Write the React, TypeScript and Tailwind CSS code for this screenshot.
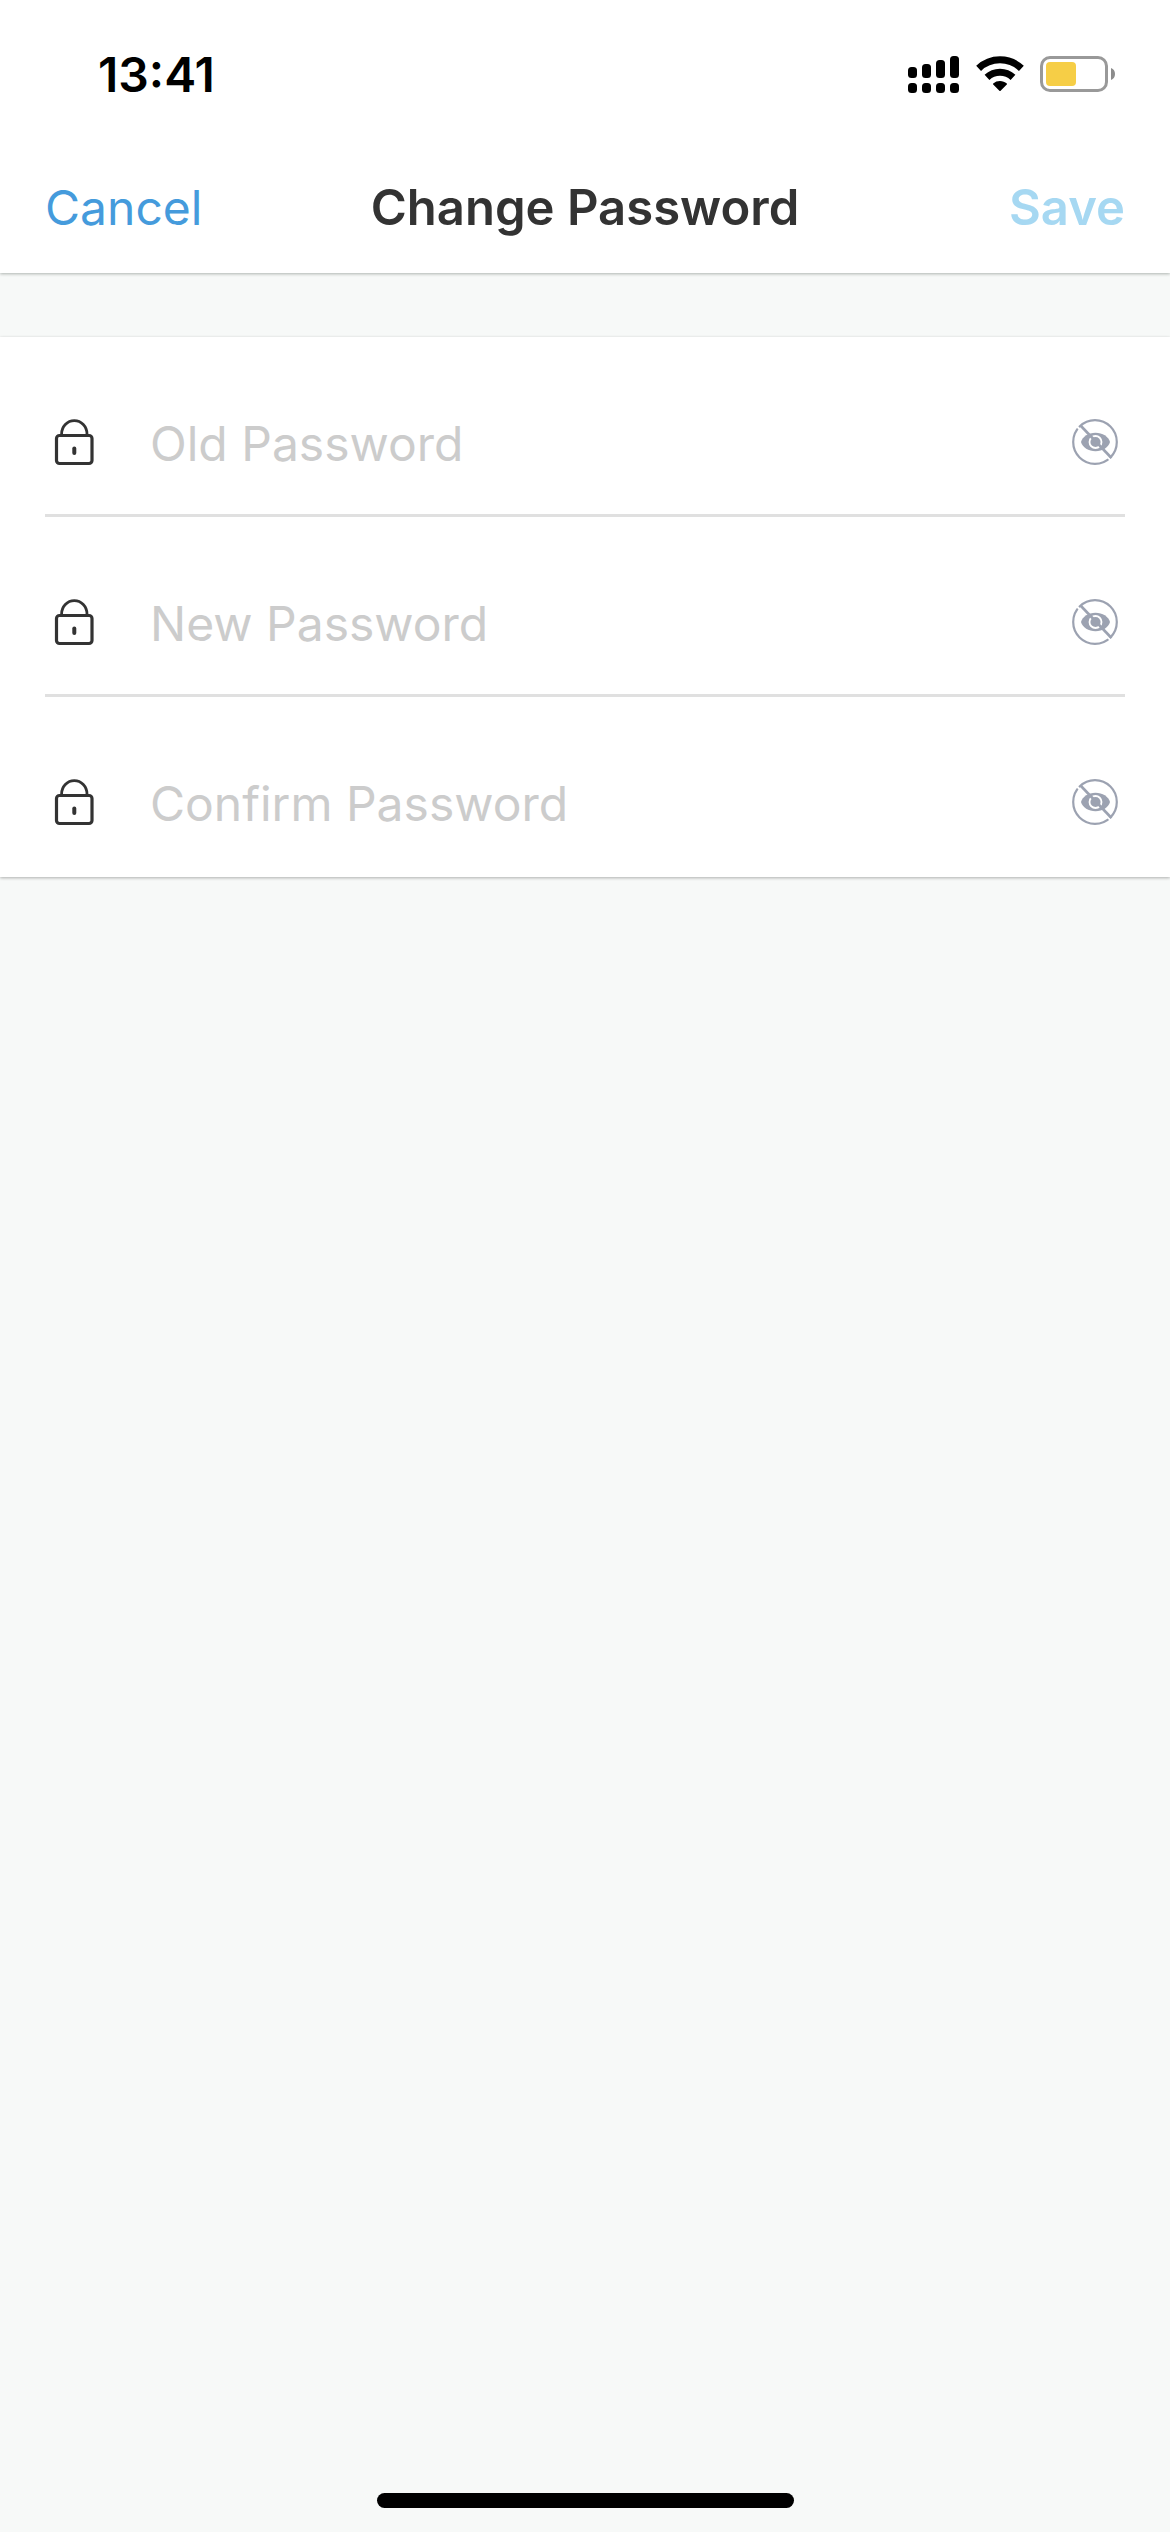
import { useState } from 'react';

interface PasswordFieldProps {
  id: string;
  label: string;
  last?: boolean;
}

const FIELDS = [
  { id: 'old-password', label: 'Old Password' },
  { id: 'new-password', label: 'New Password' },
  { id: 'confirm-password', label: 'Confirm Password' },
];

function SignalIcon() {
  return (
    <svg viewBox="0 0 52 38" className="h-[38px] w-[52px]" fill="currentColor">
      <rect x="0" y="11" width="9" height="11" rx="3.5" />
      <rect x="14" y="8" width="9" height="14" rx="3.5" />
      <rect x="28" y="4" width="9" height="18" rx="3.5" />
      <rect x="42" y="0" width="9" height="22" rx="3.5" />
      <rect x="0" y="27" width="9" height="10" rx="3.5" />
      <rect x="14" y="27" width="9" height="10" rx="3.5" />
      <rect x="28" y="27" width="9" height="10" rx="3.5" />
      <rect x="42" y="27" width="9" height="10" rx="3.5" />
    </svg>
  );
}

function WifiIcon() {
  return (
    <svg viewBox="0 0 48 38" className="h-[38px] w-12" fill="none" stroke="currentColor">
      <path d="M2.6 12.4A31 31 0 0 1 45.4 12.4" strokeWidth="7" />
      <path d="M11 21.4A19 19 0 0 1 37 21.4" strokeWidth="7" />
      <path
        d="M24 25c2.6 0 5 .9 6.8 2.4.3.3.3.7 0 1l-6.2 6.4c-.4.4-.8.4-1.2 0l-6.2-6.4c-.3-.3-.3-.7 0-1A10.6 10.6 0 0 1 24 25Z"
        fill="currentColor"
        stroke="none"
      />
    </svg>
  );
}

function BatteryIcon() {
  return (
    <svg viewBox="0 0 76 38" className="h-[38px] w-[76px]">
      <rect x="1.5" y="1.5" width="65" height="33" rx="8.5" fill="none" stroke="#999999" strokeWidth="3" />
      <rect x="6" y="6" width="30" height="24" rx="4" fill="#f6ce46" />
      <path d="M71 12c2.6 1 4 3.3 4 6s-1.4 5-4 6V12Z" fill="#8c8c8c" />
    </svg>
  );
}

function LockIcon() {
  return (
    <svg viewBox="0 0 40 48" className="h-12 w-10" fill="none" stroke="#333333" strokeWidth="3.2">
      <rect x="2.5" y="17.5" width="35.5" height="28" rx="3" />
      <path d="M7.6 16a12.7 13.4 0 0 1 25.4 0" strokeWidth="2.8" />
      <path d="M20.3 30.5v4.5" strokeWidth="4" strokeLinecap="round" />
    </svg>
  );
}

function EyeIcon({ off }: { off: boolean }) {
  return (
    <svg viewBox="0 0 48 48" className="size-12" fill="none" stroke="#9ca2b1" strokeWidth="2.2">
      <circle cx="24" cy="24" r="21.8" />
      <path
        d="M10 24c1.500-5.500 7.500-9.300 14.500-9.300S37.500 18.500 39 24c-1.500 5.500-7.500 9.300-14.500 9.300S11.500 29.500 10 24Z"
        fill="#9ca2b1"
        stroke="none"
      />
      <circle cx="24.5" cy="24" r="6" stroke="#ffffff" strokeWidth="1.8" />
      {off && (
        <>
          {/* breaks in the ring beside each end of the slash */}
          <path d="M5 7.5 9.500 12M37 39.500 40.500 43" stroke="#ffffff" strokeWidth="2" />
          <path d="M9.500 7.500 40.500 40" strokeWidth="2.600" />
        </>
      )}
    </svg>
  );
}

function StatusBar() {
  return (
    <div className="flex h-[141px] items-center justify-between pl-[98px] pr-[54px] pt-2 text-black">
      <span className="text-5xl font-semibold leading-none">13:41</span>
      <div className="flex items-center gap-4">
        <SignalIcon />
        <WifiIcon />
        <BatteryIcon />
      </div>
    </div>
  );
}

function PasswordField({ id, label, last = false }: PasswordFieldProps) {
  const [visible, setVisible] = useState(false);

  return (
    <div
      className={`mx-[45px] flex h-[180px] items-center border-b-[3px] pt-[33px] ${
        last ? 'border-transparent' : 'border-[#e0e0e0]'
      }`}
    >
      <label htmlFor={id} className="ml-[9px] shrink-0">
        <LockIcon />
      </label>
      <input
        id={id}
        type={visible ? 'text' : 'password'}
        aria-label={label}
        placeholder={label}
        className="ml-14 h-20 min-w-0 flex-1 bg-transparent pt-0.5 text-5xl text-[#333333] outline-none placeholder:text-[#cccccc]"
      />
      <button
        type="button"
        aria-label={visible ? 'Hide' : 'Show'}
        onClick={() => setVisible(!visible)}
        className="mr-[6px] shrink-0"
      >
        <EyeIcon off={!visible} />
      </button>
    </div>
  );
}

export default function App() {
  return (
    <div className="flex min-h-screen flex-col bg-[#f7f9f8] font-['Inter',sans-serif]">
      <header className="bg-white shadow-[0_1px_3px_rgba(0,20,10,0.3)]">
        <StatusBar />
        <nav className="grid h-[132px] grid-cols-[1fr_auto_1fr] items-center px-[45px] pt-0.5 text-[49px]">
          <button type="button" className="justify-self-start text-5xl text-[#459bdc]">
            Cancel
          </button>
          <h1 className="font-semibold text-[#333333]">Change Password</h1>
          <button type="submit" form="password-form" className="justify-self-end font-semibold text-[#a6d8f2]">
            Save
          </button>
        </nav>
      </header>

      <form
        id="password-form"
        onSubmit={(e) => e.preventDefault()}
        className="mt-16 bg-white shadow-[0_1px_3px_rgba(0,0,0,0.3)]"
      >
        {FIELDS.map((field, i) => (
          <PasswordField key={field.id} {...field} last={i === FIELDS.length - 1} />
        ))}
      </form>

      {/* Home indicator */}
      <div className="mx-auto mb-6 mt-auto h-[15px] w-[417px] rounded-full bg-black" />
    </div>
  );
}
